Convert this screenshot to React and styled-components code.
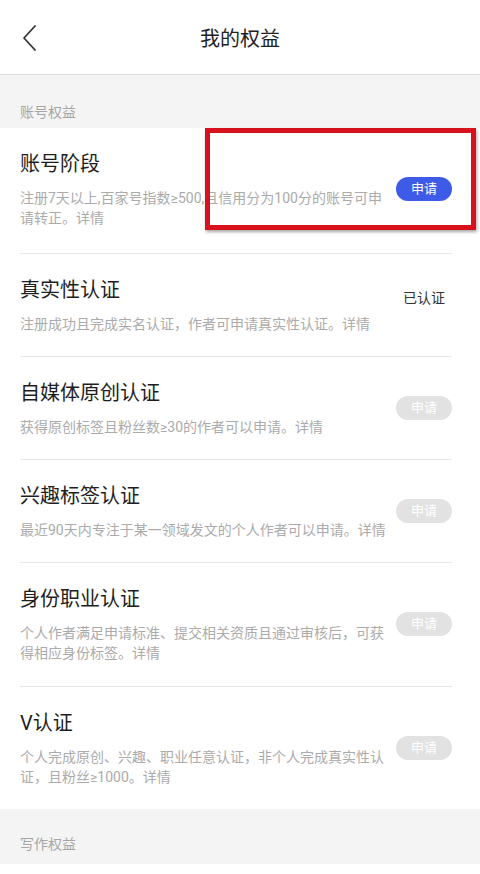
import React from "react";
import styled, { createGlobalStyle } from "styled-components";

const GlobalStyle = createGlobalStyle`
  html, body {
    margin: 0;
    padding: 0;
    background: #fff;
  }
  body {
    font-family: Roboto, "Noto Sans CJK SC", sans-serif;
  }
`;

const Page = styled.div`
  position: relative;
  width: 480px;
  min-height: 874px;
  background: #fff;
`;

const TopBar = styled.div`
  height: 74px;
  display: flex;
  align-items: center;
  justify-content: center;
  position: relative;
  border-bottom: 1px solid #dcdcdc;
  background: #fff;
`;

const BackButton = styled.button`
  position: absolute;
  left: 19px;
  top: 24px;
  width: 20px;
  height: 28px;
  padding: 0;
  border: none;
  background: none;
  display: flex;
  align-items: center;
  justify-content: center;
`;

const Title = styled.h1`
  margin: 0;
  font-size: 20px;
  font-weight: 400;
  color: #222;
  line-height: 28px;
  padding-top: 4px;
`;

const SectionHeader = styled.div`
  background: #f4f4f4;
  height: ${(p) => p.$h}px;
  padding-left: 20px;
  display: flex;
  align-items: center;
  padding-top: ${(p) => p.$pt}px;
  box-sizing: border-box;
  font-size: 14px;
  color: #a6a6a6;
`;

const Item = styled.div`
  padding-left: 20px;
  background: #fff;
`;

const ItemInner = styled.div`
  margin-right: 28px;
  display: flex;
  align-items: center;
  gap: 4px;
  padding: 22px 0 ${(p) => p.$pb}px;
  border-bottom: ${(p) => (p.$last ? "none" : "1px solid #e6e6e6")};
`;

const ItemText = styled.div`
  flex: 1;
  min-width: 0;
`;

const ItemTitle = styled.div`
  font-size: 20px;
  line-height: 28px;
  color: #1e1e1e;
  margin-bottom: 10px;
`;

const ItemDesc = styled.div`
  font-size: 14px;
  line-height: 20px;
  color: #ababab;
`;

const ActionButton = styled.button`
  flex: none;
  width: 56px;
  height: 24px;
  border: none;
  border-radius: 12px;
  padding: 0;
  font-family: inherit;
  font-size: 13px;
  line-height: 24px;
  color: #fff;
  background: ${(p) => (p.$active ? "#3d5be6" : "#e2e2e2")};
`;

const Status = styled.div`
  flex: none;
  width: 56px;
  text-align: center;
  font-size: 14px;
  color: #333;
  margin-top: -16px;
`;

const Highlight = styled.div`
  position: absolute;
  left: 205px;
  top: 128px;
  width: 271px;
  height: 102px;
  box-sizing: border-box;
  border: 5px solid #d7121c;
  box-shadow: 1px 2px 3px rgba(0, 0, 0, 0.35);
  pointer-events: none;
`;

const items = [
  {
    title: "账号阶段",
    desc: "注册7天以上,百家号指数≥500,且信用分为100分的账号可申请转正。详情",
    action: "active",
    pb: 25,
  },
  {
    title: "真实性认证",
    desc: "注册成功且完成实名认证，作者可申请真实性认证。详情",
    action: "done",
    pb: 22,
  },
  {
    title: "自媒体原创认证",
    desc: "获得原创标签且粉丝数≥30的作者可以申请。详情",
    action: "disabled",
    pb: 22,
  },
  {
    title: "兴趣标签认证",
    desc: "最近90天内专注于某一领域发文的个人作者可以申请。详情",
    action: "disabled",
    pb: 22,
  },
  {
    title: "身份职业认证",
    desc: "个人作者满足申请标准、提交相关资质且通过审核后，可获得相应身份标签。详情",
    action: "disabled",
    pb: 23,
  },
  {
    title: "V认证",
    desc: "个人完成原创、兴趣、职业任意认证，非个人完成真实性认证，且粉丝≥1000。详情",
    action: "disabled",
    pb: 22,
  },
];

const ChevronLeft = () => (
  <svg width="16" height="28" viewBox="0 0 16 28" fill="none">
    <path d="M14 2 L3 14 L14 26" stroke="#333" strokeWidth="1.8" strokeLinecap="round" strokeLinejoin="round" />
  </svg>
);

export default function App() {
  return (
    <Page>
      <GlobalStyle />
      <TopBar>
        <BackButton aria-label="返回">
          <ChevronLeft />
        </BackButton>
        <Title>我的权益</Title>
      </TopBar>

      <SectionHeader $h={53} $pt={18}>账号权益</SectionHeader>

      {items.map((it, i) => (
        <Item key={it.title}>
          <ItemInner $pb={it.pb} $last={i === items.length - 1}>
            <ItemText>
              <ItemTitle>{it.title}</ItemTitle>
              <ItemDesc>{it.desc}</ItemDesc>
            </ItemText>
            {it.action === "done" ? (
              <Status>已认证</Status>
            ) : (
              <ActionButton $active={it.action === "active"}>申请</ActionButton>
            )}
          </ItemInner>
        </Item>
      ))}

      <SectionHeader $h={55} $pt={12}>写作权益</SectionHeader>

      <Highlight />
    </Page>
  );
}
